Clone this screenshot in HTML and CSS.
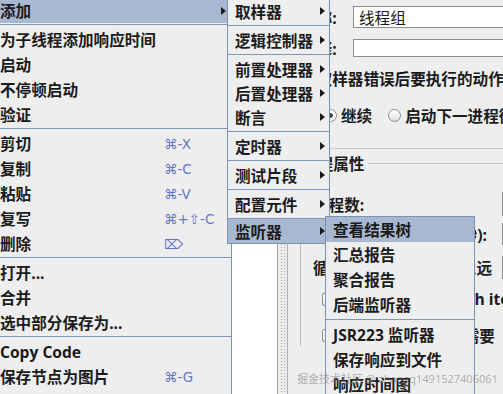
FILE: index.html
```html
<!DOCTYPE html>
<html lang="zh-CN">
<head>
  <meta charset="UTF-8">
  <title>线程组</title>
  <link rel="stylesheet" href="styles.css">
</head>
<body>
  <div class="app">
    <div class="tree"></div>
    <div class="splitter"></div>
    <div class="editor">
      <div class="field-row name-row"><span class="lbl">名称:</span><span class="text-field">线程组</span></div>
      <div class="field-row comment-row"><span class="lbl">注释:</span><span class="text-field"></span></div>
      <div class="hint">在取样器错误后要执行的动作</div>
      <div class="radio-row">
        <span class="radio checked"></span><span>继续</span>
        <span class="radio"></span><span>启动下一进程循环</span>
      </div>
      <div class="rule"></div>
      <div class="group">
        <div class="group-title"><span>线程属性</span></div>
        <div class="prop-row threads"><span class="prop-label">线程数:</span><span class="text-field"></span></div>
        <div class="prop-row ramp"><span class="prop-label right">Ramp-Up时间(秒):</span><span class="text-field"></span></div>
        <div class="prop-row loops"><span class="prop-label">循环次数</span><span class="check"></span><span class="forever">永远</span><span class="text-field"></span></div>
        <div class="check-row same-user"><span class="check"></span><span>Same user on each iteration</span></div>
        <div class="check-row delay"><span class="check"></span><span>延迟创建线程直到需要</span></div>
      </div>
    </div>
  </div>

  <div class="menu main-menu">
    <div class="item sub active"><span>添加</span></div>
    <div class="sep"></div>
    <div class="item"><span>为子线程添加响应时间</span></div>
    <div class="item"><span>启动</span></div>
    <div class="item"><span>不停顿启动</span></div>
    <div class="item"><span>验证</span></div>
    <div class="sep"></div>
    <div class="item"><span class="label">剪切</span><span class="shortcut">⌘-X</span></div>
    <div class="item"><span class="label">复制</span><span class="shortcut">⌘-C</span></div>
    <div class="item"><span class="label">粘贴</span><span class="shortcut">⌘-V</span></div>
    <div class="item"><span class="label">复写</span><span class="shortcut">⌘+⇧-C</span></div>
    <div class="item"><span class="label">删除</span><span class="shortcut">⌦</span></div>
    <div class="sep"></div>
    <div class="item"><span>打开...</span></div>
    <div class="item"><span>合并</span></div>
    <div class="item"><span>选中部分保存为...</span></div>
    <div class="sep"></div>
    <div class="item"><span>Copy Code</span></div>
    <div class="item"><span class="label">保存节点为图片</span><span class="shortcut">⌘-G</span></div>
    <div class="item disabled"><span>保存屏幕为图片</span></div>
  </div>

  <div class="menu sub-menu">
    <div class="item sub"><span>取样器</span></div>
    <div class="sep"></div>
    <div class="item sub"><span>逻辑控制器</span></div>
    <div class="sep"></div>
    <div class="item sub"><span>前置处理器</span></div>
    <div class="item sub"><span>后置处理器</span></div>
    <div class="item sub"><span>断言</span></div>
    <div class="sep"></div>
    <div class="item sub"><span>定时器</span></div>
    <div class="sep"></div>
    <div class="item sub"><span>测试片段</span></div>
    <div class="sep"></div>
    <div class="item sub"><span>配置元件</span></div>
    <div class="sep tight"></div>
    <div class="item sub active"><span>监听器</span></div>
  </div>

  <div class="menu listener-menu">
    <div class="item active"><span>查看结果树</span></div>
    <div class="item"><span>汇总报告</span></div>
    <div class="item"><span>聚合报告</span></div>
    <div class="item"><span>后端监听器</span></div>
    <div class="sep"></div>
    <div class="item"><span>JSR223 监听器</span></div>
    <div class="item"><span>保存响应到文件</span></div>
    <div class="item"><span>响应时间图</span></div>
  </div>

  <div class="watermark">掘金技术社区 @ zhangq1491527406061</div>
</body>
</html>
```

FILE: styles.css
```css
body {
  margin: 0;
  width: 503px;
  height: 394px;
  overflow: hidden;
  position: relative;
  background: #eeeeee;
  font-family: "Open Sans", "Noto Sans CJK SC", sans-serif;
  font-size: 15.6px;
  font-weight: 700;
  color: #1b1b1b;
}

/* background window */
.app {
  display: flex;
  height: 394px;
}
.tree {
  flex: none;
  width: 277px;
  background: #ffffff;
  border-right: 1px solid #9ba3b4;
}
.splitter {
  flex: none;
  width: 10px;
  box-sizing: border-box;
  border-right: 1px solid #a9b0be;
}
.splitter::before {
  content: "";
  display: block;
  margin-left: 2px;
  width: 5px;
  height: 100%;
  background-image: radial-gradient(circle, #a8a8a8 0.7px, transparent 1px);
  background-size: 3px 3px;
}
.editor {
  flex: 1;
  overflow: hidden;
  padding-left: 13px;
  white-space: nowrap;
}
.field-row {
  display: flex;
  align-items: center;
  width: 400px;
}
.lbl {
  flex: none;
  width: 52px;
}
.text-field {
  flex: 1;
  box-sizing: border-box;
  height: 100%;
  background: #ffffff;
  border: 1px solid #8e8e8e;
  padding-left: 5px;
  font-weight: 400;
  display: flex;
  align-items: center;
}
.name-row {
  margin-top: 6px;
  height: 22px;
}
.comment-row {
  margin-top: 11px;
  height: 18px;
}
.hint {
  margin-top: 11px;
  line-height: 22px;
}
.radio-row {
  margin-top: 14px;
  height: 22px;
  width: 400px;
  display: flex;
  align-items: center;
  padding-left: 23px;
}
.radio {
  flex: none;
  width: 11px;
  height: 11px;
  border: 1px solid #8d8d8d;
  border-radius: 50%;
  background: linear-gradient(#ffffff, #e2e2e2);
  margin-right: 4px;
}
.radio.checked {
  background: radial-gradient(circle, #3a3a3a 2px, #ffffff 2.5px);
}
.radio-row .radio + span + .radio {
  margin-left: 16px;
}
.rule {
  margin-top: 22px;
  height: 1px;
  background: #c3c6d0;
}
.group {
  margin-left: -1px;
  border-left: 1px solid #b7bbc6;
  padding-left: 1px;
}
.group-title {
  margin-top: 3px;
  height: 22px;
  display: flex;
  align-items: center;
  gap: 4px;
}
.group-title::after {
  content: "";
  flex: 1;
  height: 1px;
  background: #c3c6d0;
}
.prop-row {
  display: flex;
  align-items: center;
  width: 249px;
  padding-left: 11px;
}
.prop-row .text-field {
  flex: none;
  width: 60px;
}
.prop-label {
  flex: 1;
}
.prop-label.right {
  text-align: right;
  margin-right: 15px;
}
.threads {
  margin-top: 18px;
  height: 24px;
}
.ramp {
  margin-top: 7px;
  height: 22px;
}
.loops {
  margin-top: 11px;
  height: 23px;
}
.check {
  flex: none;
  width: 11px;
  height: 11px;
  border: 1px solid #8d8d8d;
  border-radius: 2px;
  background: linear-gradient(#ffffff, #e4e4e4);
}
.forever {
  margin: 0 10px 0 4px;
}
.check-row {
  display: flex;
  align-items: center;
  gap: 4px;
  width: 400px;
  height: 22px;
  padding-left: 20px;
}
.same-user {
  margin-top: 9px;
}
.delay {
  margin-top: 14px;
}

/* popup menus */
.menu {
  position: absolute;
  box-sizing: border-box;
  background: #eeeeee;
  border: 1px solid #7f90b6;
  white-space: nowrap;
}
.item {
  display: flex;
  align-items: center;
  height: 25px;
}
.item.active {
  background: #a8b8d0;
}
.item.disabled {
  color: #a4a4a4;
}
.sub::after {
  content: "";
  margin-left: auto;
  border-left: 5px solid #1b1b1b;
  border-top: 4px solid transparent;
  border-bottom: 4px solid transparent;
}
.sep {
  height: 1px;
  background: #8294bb;
  margin: 1px 0 2px;
}
.main-menu {
  left: -2px;
  top: -3px;
  width: 234px;
  padding-left: 1px;
}
.main-menu .sub::after {
  margin-right: 5px;
}
.label {
  width: 164px;
}
.shortcut {
  font-family: "DejaVu Sans", sans-serif;
  font-weight: 400;
  font-size: 13.5px;
  color: #6474c8;
}
.sub-menu {
  left: 227px;
  top: -2px;
  width: 103px;
  padding-left: 7px;
}
.sub-menu .item {
  height: 24px;
  margin-left: -7px;
  padding-left: 7px;
}
.sub-menu .sub::after {
  margin-right: 4px;
}
.sub-menu .sep {
  margin: 2px 0 2px -7px;
}
.sub-menu .sep.tight {
  margin-bottom: 0;
}
.listener-menu {
  left: 325px;
  top: 216px;
  width: 150px;
}
.listener-menu .item {
  padding-left: 7px;
}
.listener-menu .sep {
  margin: 2px 0 2px;
}

.watermark {
  position: absolute;
  left: 297px;
  top: 370px;
  font-size: 11px;
  font-weight: 400;
  color: rgba(125, 125, 125, 0.6);
  white-space: nowrap;
}
```
